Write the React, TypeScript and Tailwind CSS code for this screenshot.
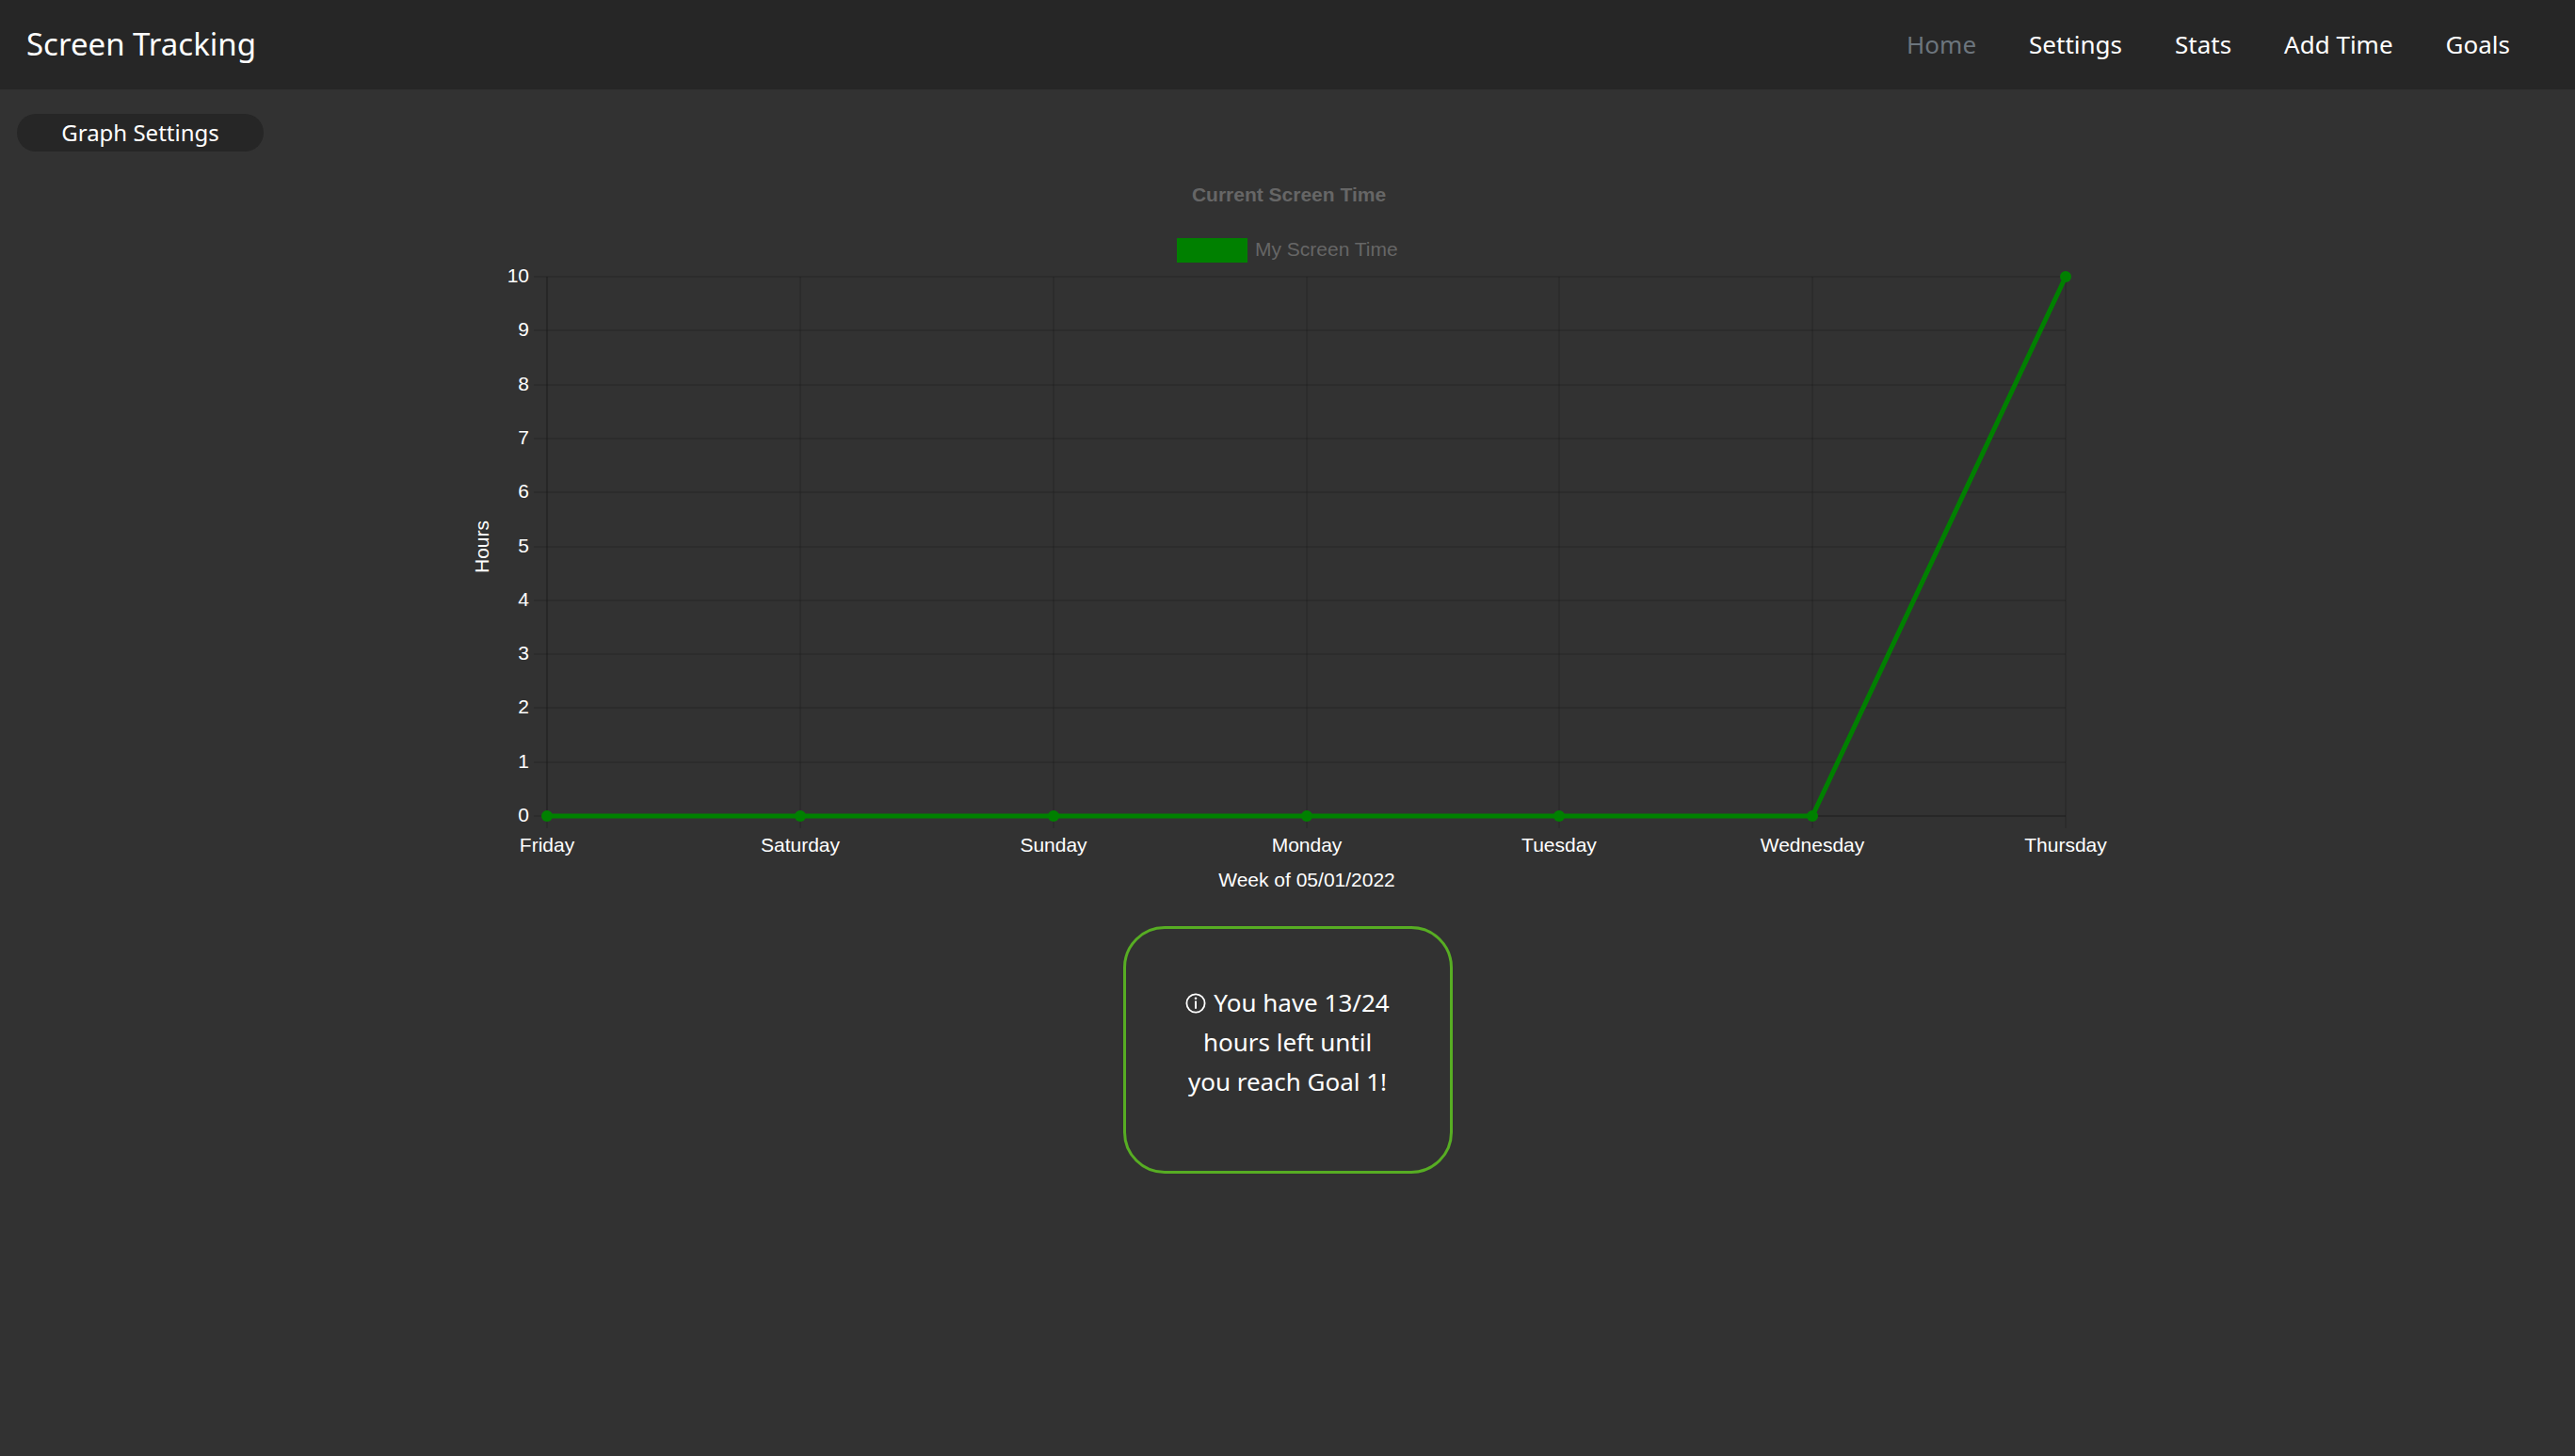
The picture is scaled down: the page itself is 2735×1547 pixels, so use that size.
const links = [
  { label: 'Home', current: true },
  { label: 'Settings', current: false },
  { label: 'Stats', current: false },
  { label: 'Add Time', current: false },
  { label: 'Goals', current: false },
];

const data = [
  { day: 'Friday', hours: 0 },
  { day: 'Saturday', hours: 0 },
  { day: 'Sunday', hours: 0 },
  { day: 'Monday', hours: 0 },
  { day: 'Tuesday', hours: 0 },
  { day: 'Wednesday', hours: 0 },
  { day: 'Thursday', hours: 10 },
];

const LEFT = 89;
const RIGHT = 1702;
const TOP = 110;
const BOTTOM = 683;
const MAX_HOURS = 10;

const xAt = (i: number) => Math.round(LEFT + ((RIGHT - LEFT) * i) / (data.length - 1));
const yAt = (hours: number) => Math.round(BOTTOM - ((BOTTOM - TOP) * hours) / MAX_HOURS);

function Header() {
  return (
    <header className="flex h-[95px] items-center justify-between bg-[#262626] pr-[69px] pb-px pl-7">
      <a href="#" className="text-[33px] leading-[48px]">
        Screen Tracking
      </a>
      <nav className="flex gap-14 text-[26px] leading-[42px]">
        {links.map((link) => (
          <a
            key={link.label}
            href="#"
            aria-current={link.current ? 'page' : undefined}
            className={link.current ? 'text-[#6c757d]' : 'text-white'}
          >
            {link.label}
          </a>
        ))}
      </nav>
    </header>
  );
}

function ScreenTimeChart() {
  const ticks = Array.from({ length: MAX_HOURS + 1 }, (_, i) => i);
  return (
    <svg
      viewBox="0 0 1751 776"
      role="img"
      aria-label="Current Screen Time"
      className="block w-full font-['Liberation_Sans',Arial,sans-serif] text-[21px]"
    >
      <text x="877" y="30" textAnchor="middle" fill="#666666" fontWeight="700">
        Current Screen Time
      </text>
      <rect x="758" y="69" width="75" height="26" fill="#008000" />
      <text x="841" y="88" fill="#666666">
        My Screen Time
      </text>

      <g stroke="#000000" strokeOpacity="0.1" strokeWidth="2">
        {ticks.map((t) => (
          <line key={t} x1={LEFT - 14} x2={RIGHT} y1={yAt(t)} y2={yAt(t)} />
        ))}
        {data.map((d, i) => (
          <line key={d.day} x1={xAt(i)} x2={xAt(i)} y1={TOP} y2={BOTTOM + 13} />
        ))}
        <line x1={LEFT} x2={LEFT} y1={TOP} y2={BOTTOM} />
        <line x1={LEFT} x2={RIGHT} y1={BOTTOM} y2={BOTTOM} />
      </g>

      <g fill="#ffffff">
        {ticks.map((t) => (
          <text key={t} x="70" y={yAt(t) + 6} textAnchor="end">
            {t}
          </text>
        ))}
        {data.map((d, i) => (
          <text key={d.day} x={xAt(i)} y="721" textAnchor="middle">
            {d.day}
          </text>
        ))}
        <text x="896" y="758" textAnchor="middle">
          Week of 05/01/2022
        </text>
        <text transform="translate(27 397) rotate(-90)" textAnchor="middle">
          Hours
        </text>
      </g>

      <polyline
        points={data.map((d, i) => `${xAt(i)},${yAt(d.hours)}`).join(' ')}
        fill="none"
        stroke="#008000"
        strokeWidth="5"
      />
      {data.map((d, i) => (
        <circle key={d.day} cx={xAt(i)} cy={yAt(d.hours)} r="6" fill="#008000" />
      ))}
    </svg>
  );
}

function InfoIcon() {
  return (
    <svg viewBox="0 0 22 22" aria-hidden="true" className="mr-2 inline-block size-[22px] align-[-2px]">
      <circle cx="11" cy="11" r="9.6" fill="none" stroke="currentColor" strokeWidth="1.8" />
      <path d="M11 8.6V16.8" stroke="currentColor" strokeWidth="2" />
      <circle cx="11" cy="5.8" r="1.3" fill="currentColor" />
    </svg>
  );
}

export default function App() {
  return (
    <div className="min-h-screen bg-[#323232] font-['Noto_Sans','Open_Sans',sans-serif] text-white">
      <Header />
      <main className="pt-[26px]">
        <button
          type="button"
          className="ml-[18px] flex h-10 w-[262px] items-center justify-center rounded-full bg-[#262626] text-[24px] leading-[36px]"
        >
          Graph Settings
        </button>
        <div className="mx-auto mt-[23px] w-full max-w-[1751px]">
          <ScreenTimeChart />
        </div>
        <section className="mx-auto mt-6 flex min-h-[263px] w-[350px] items-start justify-center rounded-[44px] border-3 border-[#57ad23] px-12 pt-[57px]">
          <p className="text-center text-[26px] leading-[42px]">
            <InfoIcon />
            You have 13/24
            <br />
            hours left until
            <br />
            you reach Goal 1!
          </p>
        </section>
      </main>
    </div>
  );
}
